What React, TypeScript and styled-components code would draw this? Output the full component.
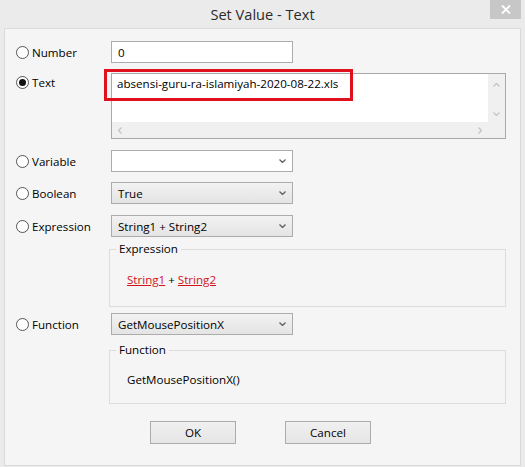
import React from 'react';
import styled, { createGlobalStyle } from 'styled-components';

const Global = createGlobalStyle`
  html, body { margin: 0; padding: 0; background: #ebebeb; }
  body { font-family: "Open Sans", "Liberation Sans", sans-serif; font-size: 11.6px; color: #000; }
  * { box-sizing: border-box; }
`;

const Window = styled.div`
  width: 525px;
  height: 467px;
  background: #ebebeb;
  display: flex;
  flex-direction: column;
`;

const TitleBar = styled.div`
  height: 28px;
  flex: none;
  display: grid;
  grid-template-columns: 1fr auto 1fr;
  align-items: start;
`;

const Title = styled.div`
  grid-column: 2;
  font-size: 14.6px;
  line-height: 28px;
  color: #2b2b2b;
`;

const CloseButton = styled.div`
  grid-column: 3;
  justify-self: end;
  margin-right: 4px;
  width: 31px;
  height: 19px;
  background: #c7c7c7;
  display: flex;
  align-items: center;
  justify-content: center;
`;

const Panel = styled.div`
  flex: 1;
  margin: 0 4px 1px;
  border: 1px solid #dadada;
  background: #f5f5f5;
  padding: 12px 0 0 11px;
  display: flex;
  flex-direction: column;
`;

const Row = styled.div<{ $mt: number }>`
  display: grid;
  grid-template-columns: 95px auto;
  align-items: start;
  margin-top: ${(p) => p.$mt}px;
`;

const RadioLabel = styled.label<{ $shift?: number }>`
  display: flex;
  align-items: center;
  gap: 3px;
  height: 22px;
  margin-top: ${(p) => p.$shift ?? 0}px;
  color: #000;
`;

const RadioCircle = styled.span<{ $checked?: boolean }>`
  width: 13px;
  height: 13px;
  border-radius: 50%;
  border: 1px solid #555;
  background: #fff;
  display: flex;
  align-items: center;
  justify-content: center;
  &::after {
    content: '';
    width: 7px;
    height: 7px;
    border-radius: 50%;
    background: ${(p) => (p.$checked ? '#111' : 'transparent')};
  }
`;

const Input = styled.div`
  width: 182px;
  height: 22px;
  border: 1px solid #abadb3;
  background: #fff;
  padding-left: 6px;
  display: flex;
  align-items: center;
`;

const TextBox = styled.div`
  position: relative;
  width: 395px;
  height: 66px;
  border: 1px solid #a9a9a9;
  display: grid;
  grid-template-columns: 1fr 17px;
  grid-template-rows: 1fr 16px;
  background: #f0f0f0;
`;

const TextContent = styled.div`
  background: #fff;
  padding: 2px 0 0 5px;
  line-height: 16px;
`;

const VScroll = styled.div`
  display: flex;
  flex-direction: column;
  align-items: center;
  justify-content: space-between;
  padding: 9px 0 6px;
`;

const HScroll = styled.div`
  display: flex;
  align-items: center;
  justify-content: space-between;
  padding: 0 6px 0 6px;
`;

const Highlight = styled.div`
  position: absolute;
  left: -8px;
  top: -5px;
  width: 249px;
  height: 32px;
  border: 3px solid #e0101c;
  pointer-events: none;
`;

const Select = styled.div<{ $editable?: boolean }>`
  width: 182px;
  height: 22px;
  border: 1px solid #acacac;
  background: ${(p) => (p.$editable ? '#fff' : 'linear-gradient(#f2f2f2, #e4e4e4)')};
  padding: 0 6px 0 6px;
  display: flex;
  align-items: center;
  justify-content: space-between;
`;

const Group = styled.fieldset<{ $mt: number; $pt: number; $pb: number }>`
  margin: ${(p) => p.$mt}px 0 0 93px;
  width: 397px;
  border: 1px solid #dcdcdc;
  padding: ${(p) => p.$pt}px 0 ${(p) => p.$pb}px 6px;
  min-width: 0;
`;

const Legend = styled.legend`
  padding: 0 3px;
  line-height: 16px;
  color: #000;
`;

const GroupContent = styled.div`
  padding-left: 11px;
  line-height: 16px;
`;

const Link = styled.span`
  color: #d0141c;
  text-decoration: underline;
`;

const ButtonRow = styled.div`
  display: flex;
  gap: 49px;
  margin-top: 17px;
  padding-left: 134px;
`;

const Button = styled.div`
  width: 86px;
  height: 23px;
  border: 1px solid #acacac;
  background: linear-gradient(#f0f0f0, #e5e5e5);
  display: flex;
  align-items: center;
  justify-content: center;
`;

const Chevron = ({ dir, color }: { dir: 'up' | 'down' | 'left' | 'right'; color: string }) => {
  const pts: Record<string, string> = {
    down: '0.5,0.5 3.5,3.5 6.5,0.5',
    up: '0.5,3.5 3.5,0.5 6.5,3.5',
    left: '3.5,0.5 0.5,3.5 3.5,6.5',
    right: '0.5,0.5 3.5,3.5 0.5,6.5',
  };
  const vertical = dir === 'up' || dir === 'down';
  return (
    <svg width={vertical ? 7 : 4} height={vertical ? 4 : 7} viewBox={vertical ? '0 0 7 4' : '0 0 4 7'}>
      <polyline points={pts[dir]} fill="none" stroke={color} strokeWidth="1.3" />
    </svg>
  );
};

const Radio = ({ label, checked, shift }: { label: string; checked?: boolean; shift?: number }) => (
  <RadioLabel $shift={shift}>
    <RadioCircle $checked={checked} />
    {label}
  </RadioLabel>
);

export default function App() {
  return (
    <>
      <Global />
      <Window>
        <TitleBar>
          <Title>Set Value - Text</Title>
          <CloseButton>
            <svg width="10" height="9" viewBox="0 0 10 9">
              <path d="M1 0.5 L9 8.5 M9 0.5 L1 8.5" stroke="#fff" strokeWidth="1.8" />
            </svg>
          </CloseButton>
        </TitleBar>
        <Panel>
          <Row $mt={0}>
            <Radio label="Number" />
            <Input>0</Input>
          </Row>
          <Row $mt={10}>
            <Radio label="Text" checked shift={-2} />
            <TextBox>
              <TextContent>absensi-guru-ra-islamiyah-2020-08-22.xls</TextContent>
              <VScroll>
                <Chevron dir="up" color="#c4c4c4" />
                <Chevron dir="down" color="#c4c4c4" />
              </VScroll>
              <HScroll>
                <Chevron dir="left" color="#c4c4c4" />
                <Chevron dir="right" color="#c4c4c4" />
              </HScroll>
              <div />
              <Highlight />
            </TextBox>
          </Row>
          <Row $mt={11}>
            <Radio label="Variable" />
            <Select $editable>
              <span />
              <Chevron dir="down" color="#606060" />
            </Select>
          </Row>
          <Row $mt={10}>
            <Radio label="Boolean" />
            <Select>
              <span>True</span>
              <Chevron dir="down" color="#606060" />
            </Select>
          </Row>
          <Row $mt={11}>
            <Radio label="Expression" />
            <Select>
              <span>String1 + String2</span>
              <Chevron dir="down" color="#606060" />
            </Select>
          </Row>
          <Group $mt={4} $pt={15} $pb={18}>
            <Legend>Expression</Legend>
            <GroupContent>
              <Link>String1</Link> + <Link>String2</Link>
            </GroupContent>
          </Group>
          <Row $mt={6}>
            <Radio label="Function" />
            <Select>
              <span>GetMousePositionX</span>
              <Chevron dir="down" color="#606060" />
            </Select>
          </Row>
          <Group $mt={7} $pt={14} $pb={15}>
            <Legend>Function</Legend>
            <GroupContent>GetMousePositionX()</GroupContent>
          </Group>
          <ButtonRow>
            <Button>OK</Button>
            <Button>Cancel</Button>
          </ButtonRow>
        </Panel>
      </Window>
    </>
  );
}
